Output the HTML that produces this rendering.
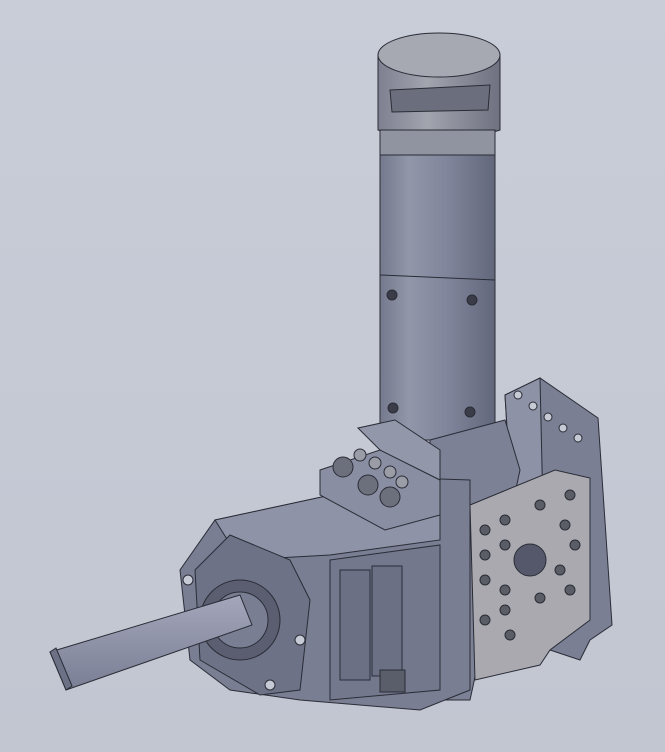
<!DOCTYPE html>
<html><head><meta charset="utf-8"><style>
html,body{margin:0;padding:0;width:665px;height:752px;overflow:hidden;background:#c6cad5}
</style></head><body>
<svg width="665" height="752" viewBox="0 0 665 752" xmlns="http://www.w3.org/2000/svg" stroke="#2a2c36" stroke-width="1">
<defs>
<linearGradient id="bg" x1="0" y1="0" x2="0" y2="1"><stop offset="0" stop-color="#c9cdd8"/><stop offset="1" stop-color="#c2c6d1"/></linearGradient>
<linearGradient id="cyl" x1="0" y1="0" x2="1" y2="0"><stop offset="0" stop-color="#75798d"/><stop offset=".25" stop-color="#9296a9"/><stop offset=".6" stop-color="#80849a"/><stop offset="1" stop-color="#63677b"/></linearGradient>
<linearGradient id="cap" x1="0" y1="0" x2="1" y2="0"><stop offset="0" stop-color="#7d8090"/><stop offset=".4" stop-color="#a2a4ae"/><stop offset="1" stop-color="#6e7180"/></linearGradient>
<linearGradient id="shaft" x1="0" y1="0" x2="0" y2="1"><stop offset="0" stop-color="#a4a7bb"/><stop offset="1" stop-color="#7a7e94"/></linearGradient>
</defs>
<rect width="665" height="752" fill="url(#bg)" stroke="none"/>
<path d="M378 55 Q440 20 500 55 L500 130 Q440 150 378 130 Z" fill="url(#cap)"/>
<ellipse cx="439" cy="55" rx="61" ry="22" fill="#a6a8b2"/>
<path d="M390 90 L490 85 L488 110 L392 112Z" fill="#6b6e7c"/>
<rect x="380" y="130" width="115" height="30" fill="#8f94a0"/>
<rect x="380" y="155" width="115" height="285" fill="url(#cyl)"/>
<line x1="380" y1="275" x2="495" y2="280"/>
<circle cx="392" cy="295" r="5" fill="#3a3c48"/><circle cx="472" cy="300" r="5" fill="#3a3c48"/>
<circle cx="393" cy="408" r="5" fill="#3a3c48"/><circle cx="470" cy="412" r="5" fill="#3a3c48"/>
<path d="M505 395 L540 378 L598 418 L612 625 L590 640 L580 660 L520 640 Z" fill="#7b7f94"/>
<path d="M505 395 L540 378 L545 600 L520 640Z" fill="#8e92a6"/>
<circle cx="518" cy="395" r="4" fill="#c6cad5"/><circle cx="533" cy="406" r="4" fill="#c6cad5"/><circle cx="548" cy="417" r="4" fill="#c6cad5"/><circle cx="563" cy="428" r="4" fill="#c6cad5"/><circle cx="578" cy="438" r="4" fill="#c6cad5"/>
<path d="M430 440 L505 420 L520 470 L470 700 L430 700Z" fill="#7d8196"/>
<path d="M215 520 L410 478 L470 480 L470 690 L420 710 L300 700 L230 690 L190 660 L180 570 Z" fill="#7a7e93"/>
<path d="M215 520 L410 478 L440 500 L440 540 L330 555 L240 560Z" fill="#8f93a7"/>
<path d="M330 560 L440 545 L440 690 L330 700Z" fill="#74788d"/>
<rect x="340" y="570" width="30" height="110" fill="#6c7085"/><rect x="372" y="566" width="30" height="110" fill="#6c7085"/>
<path d="M195 570 L230 535 L290 560 L310 600 L300 690 L260 695 L200 660 Z" fill="#6e7286"/>
<circle cx="240" cy="620" r="40" fill="#5a5e70"/><circle cx="240" cy="620" r="28" fill="#7a7e92"/>
<circle cx="188" cy="580" r="5" fill="#c6cad5"/><circle cx="270" cy="685" r="5" fill="#c6cad5"/><circle cx="300" cy="640" r="5" fill="#c6cad5"/>
<path d="M50 652 L240 595 L252 625 L66 690 Z" fill="url(#shaft)"/>
<path d="M50 652 L56 648 L72 686 L66 690Z" fill="#6d7186"/>
<path d="M320 470 L380 450 L440 480 L440 515 L385 530 L320 495Z" fill="#8a8ea2"/>
<path d="M358 428 L395 420 L440 450 L440 480 L380 450Z" fill="#9397aa"/>
<g fill="#6c6f7c"><circle cx="343" cy="467" r="10"/><circle cx="368" cy="485" r="10"/><circle cx="390" cy="497" r="10"/></g>
<g fill="#9a9ca6"><circle cx="360" cy="455" r="6"/><circle cx="375" cy="463" r="6"/><circle cx="390" cy="472" r="6"/><circle cx="402" cy="482" r="6"/></g>
<path d="M470 505 L555 470 L590 478 L590 620 L550 650 L540 665 L475 680 Z" fill="#a9a9af"/>
<g fill="#5a5c66">
<circle cx="485" cy="530" r="5"/><circle cx="505" cy="520" r="5"/><circle cx="540" cy="505" r="5"/><circle cx="570" cy="495" r="5"/>
<circle cx="485" cy="555" r="5"/><circle cx="505" cy="545" r="5"/><circle cx="565" cy="525" r="5"/>
<circle cx="485" cy="580" r="5"/><circle cx="505" cy="590" r="5"/><circle cx="560" cy="570" r="5"/><circle cx="575" cy="545" r="5"/>
<circle cx="485" cy="620" r="5"/><circle cx="505" cy="610" r="5"/><circle cx="540" cy="598" r="5"/><circle cx="570" cy="590" r="5"/>
<circle cx="510" cy="635" r="5"/>
</g>
<circle cx="530" cy="560" r="16" fill="#55586a"/>
<rect x="380" y="670" width="25" height="22" fill="#5a5d6a"/>
</svg>
</body></html>
